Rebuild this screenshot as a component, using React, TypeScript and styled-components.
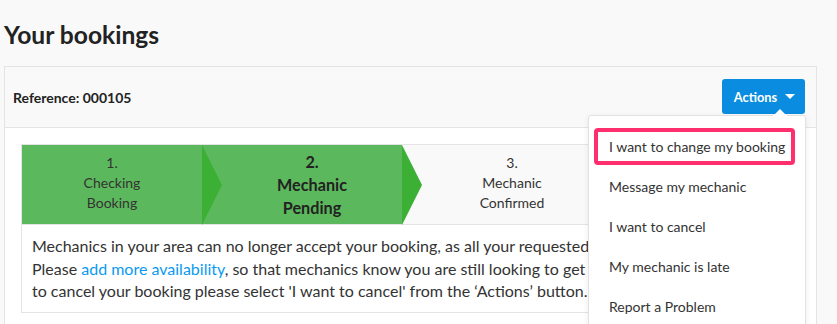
import React from "react";
import styled, { createGlobalStyle } from "styled-components";

const GlobalStyle = createGlobalStyle`
  html, body { margin: 0; padding: 0; background: #f9f9f9; }
  body { font-family: Lato, "Open Sans", Arial, sans-serif; color: #333; }
  * { box-sizing: border-box; }
`;

const Page = styled.div`
  padding: 20px 20px 0 4px;
  height: 324px;
  overflow: hidden;
`;

const Title = styled.h1`
  margin: 0 0 16px;
  font-size: 24.6px;
  line-height: 30px;
  font-weight: 700;
  color: #222;
`;

const Card = styled.div`
  width: 813px;
  border: 1px solid #e4e4e4;
  background: #fff;
`;

const CardHeader = styled.div`
  height: 61px;
  background: #f9f9f9;
  border-bottom: 1px solid #e4e4e4;
  display: flex;
  align-items: center;
  justify-content: space-between;
  padding: 0 11px 0 8px;
`;

const RefLabel = styled.div`
  font-size: 14px;
  font-weight: 700;
  color: #222;
`;

const ActionsWrap = styled.div`
  position: relative;
  margin-top: -1px;
`;

const ActionsButton = styled.button`
  width: 83px;
  height: 35px;
  border: 0;
  border-radius: 3px;
  background: #0a8de0;
  color: #fff;
  font-family: inherit;
  font-size: 12.8px;
  font-weight: 700;
  display: flex;
  align-items: center;
  justify-content: center;
  gap: 8px;
  padding: 0 0 0 2px;
`;

const Caret = styled.span`
  width: 0;
  height: 0;
  border-left: 5px solid transparent;
  border-right: 5px solid transparent;
  border-top: 5px solid #fff;
`;

const Menu = styled.ul`
  position: absolute;
  top: 36px;
  right: -1px;
  width: 218px;
  height: 240px;
  margin: 0;
  padding: 10px 0 0;
  list-style: none;
  background: #fff;
  border: 1px solid #e2e2e2;
  border-radius: 3px 3px 0 0;
  box-shadow: 0 2px 6px rgba(0, 0, 0, 0.08);
  z-index: 5;

  &::before {
    content: "";
    position: absolute;
    top: -7px;
    right: 18px;
    border-left: 7px solid transparent;
    border-right: 7px solid transparent;
    border-bottom: 7px solid #fff;
  }
`;

const MenuItem = styled.li`
  position: relative;
  height: 40px;
  padding-left: 20px;
  display: flex;
  align-items: center;
  font-size: 14px;
  color: #333;
  white-space: nowrap;
`;

const Highlight = styled.span`
  position: absolute;
  left: 5px;
  right: 10px;
  top: 2px;
  bottom: 1px;
  border: 4px solid #ff2e6d;
  border-radius: 4px;
`;

const CardBody = styled.div`
  padding: 16px 15px 30px 16px;
`;

const StatusBox = styled.div`
  border: 1px solid #e4e4e4;
`;

const Stepper = styled.div`
  display: flex;
  height: 80px;
  border-bottom: 1px solid #e4e4e4;
  background: #f9f9f9;
`;

const Step = styled.div<{ $done?: boolean; $current?: boolean; $first?: boolean; $arrow?: boolean }>`
  position: relative;
  width: ${(p) => (p.$first ? 180 : 200)}px;
  padding-left: ${(p) => (p.$first ? 0 : 20)}px;
  background: ${(p) => (p.$done ? "#5cb85c" : "#f9f9f9")};
  display: flex;
  flex-direction: column;
  align-items: center;
  justify-content: center;
  text-align: center;
  font-size: ${(p) => (p.$current ? "16.2px" : "14px")};
  line-height: ${(p) => (p.$current ? "23px" : "20px")};
  font-weight: ${(p) => (p.$current ? 700 : 400)};
  color: ${(p) => (p.$current ? "#222" : "#333")};

  ${(p) =>
    p.$arrow &&
    `
    &::after {
      content: "";
      position: absolute;
      left: 100%;
      top: 0;
      z-index: 2;
      border-top: 40px solid transparent;
      border-bottom: 40px solid transparent;
      border-left: 20px solid #3bb034;
    }
  `}
`;

const StepInner = styled.div<{ $current?: boolean }>`
  margin-top: ${(p) => (p.$current ? "0" : "-3px")};
`;

const Message = styled.div`
  padding: 10px 10px 9px;
  font-size: 16px;
  line-height: 22.5px;
  color: #333;
  white-space: nowrap;
  overflow: hidden;
`;

const Link = styled.a`
  color: #0a9af2;
  text-decoration: none;
`;

export default function App() {
  return (
    <>
      <GlobalStyle />
      <Page>
        <Title>Your bookings</Title>
        <Card>
          <CardHeader>
            <RefLabel>Reference: 000105</RefLabel>
            <ActionsWrap>
              <ActionsButton>
                Actions <Caret />
              </ActionsButton>
              <Menu>
                <MenuItem>
                  <Highlight />
                  I want to change my booking
                </MenuItem>
                <MenuItem>Message my mechanic</MenuItem>
                <MenuItem>I want to cancel</MenuItem>
                <MenuItem>My mechanic is late</MenuItem>
                <MenuItem>Report a Problem</MenuItem>
              </Menu>
            </ActionsWrap>
          </CardHeader>
          <CardBody>
            <StatusBox>
              <Stepper>
                <Step $done $first $arrow>
                  <StepInner>
                    1.
                    <br />
                    Checking
                    <br />
                    Booking
                  </StepInner>
                </Step>
                <Step $done $current $arrow>
                  <StepInner $current>
                    2.
                    <br />
                    Mechanic
                    <br />
                    Pending
                  </StepInner>
                </Step>
                <Step>
                  <StepInner>
                    3.
                    <br />
                    Mechanic
                    <br />
                    Confirmed
                  </StepInner>
                </Step>
              </Stepper>
              <Message>
                Mechanics in your area can no longer accept your booking, as all your requested times have passed.
                <br />
                Please <Link href="#">add more availability</Link>, so that mechanics know you are still looking to get your car fixed. If you'd like
                <br />
                to cancel your booking please select 'I want to cancel' from the ‘Actions’ button.
              </Message>
            </StatusBox>
          </CardBody>
        </Card>
      </Page>
    </>
  );
}
